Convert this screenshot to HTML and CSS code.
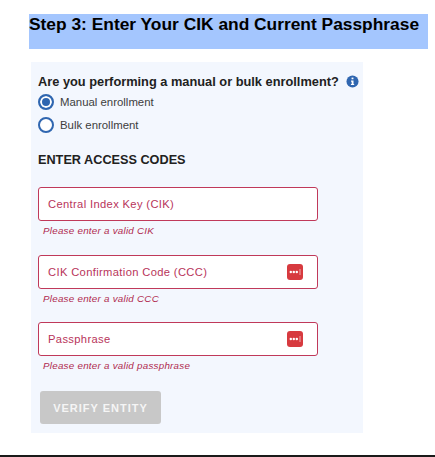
FILE: index.html
```html
<!DOCTYPE html>
<html lang="en">
  <head>
    <meta charset="UTF-8" />
    <meta name="viewport" content="width=device-width, initial-scale=1.0" />
    <title>Enter Your CIK</title>
    <link rel="stylesheet" href="styles.css">
  </head>
  <body>
    <h2 class="step-title">Step 3: Enter Your CIK and Current Passphrase</h2>
    <form class="panel">
      <div class="question">
        <span>Are you performing a manual or bulk enrollment?</span>
        <svg class="info-icon" viewBox="0 0 14 14" width="13" height="13">
          <circle cx="7" cy="7" r="6.5" fill="#2f66b0" />
          <rect x="6" y="2.8" width="2" height="1.8" fill="#fff" />
          <path d="M5.4 6h2.7v3.7h.7v1.2H5.3V9.7h.8V7.2h-.7z" fill="#fff" />
        </svg>
      </div>
      <label class="radio-row">
        <span class="radio radio-checked"></span>
        Manual enrollment
      </label>
      <label class="radio-row">
        <span class="radio"></span>
        Bulk enrollment
      </label>
      <h3 class="section-title">ENTER ACCESS CODES</h3>

      <div class="field">
        <span class="field-label">Central Index Key (CIK)</span>
      </div>
      <div class="field-error">Please enter a valid CIK</div>

      <div class="field">
        <span class="field-label">CIK Confirmation Code (CCC)</span>
        <svg class="dots-icon" viewBox="0 0 16 16" width="16" height="16">
          <rect width="16" height="16" rx="3" fill="#d73a3f" />
          <circle cx="3.8" cy="8" r="1.2" fill="#fff" />
          <circle cx="6.8" cy="8" r="1.2" fill="#fff" />
          <circle cx="9.8" cy="8" r="1.2" fill="#fff" />
          <rect x="12.6" y="5" width="0.8" height="6" fill="#f5c6c8" />
        </svg>
      </div>
      <div class="field-error">Please enter a valid CCC</div>

      <div class="field">
        <span class="field-label">Passphrase</span>
        <svg class="dots-icon" viewBox="0 0 16 16" width="16" height="16">
          <rect width="16" height="16" rx="3" fill="#d73a3f" />
          <circle cx="3.8" cy="8" r="1.2" fill="#fff" />
          <circle cx="6.8" cy="8" r="1.2" fill="#fff" />
          <circle cx="9.8" cy="8" r="1.2" fill="#fff" />
          <rect x="12.6" y="5" width="0.8" height="6" fill="#f5c6c8" />
        </svg>
      </div>
      <div class="field-error">Please enter a valid passphrase</div>

      <button class="verify-btn" type="button" disabled>VERIFY ENTITY</button>
    </form>
    <div class="page-rule"></div>
  </body>
</html>
```

FILE: styles.css
```css
html,
body {
  height: 457px;
  overflow: hidden;
}
body {
  margin: 0;
  font-family: "Liberation Sans", Arial, sans-serif;
  background-color: #fff;
}
.step-title {
  box-sizing: border-box;
  height: 35px;
  width: 399px;
  margin: 14px 0 13px 29px;
  font-size: 17.36px;
  line-height: 20px;
  font-weight: bold;
  color: #000;
  background-color: #a4c6fe;
}
.panel {
  box-sizing: border-box;
  width: 332px;
  height: 371px;
  margin-left: 31px;
  padding: 11px 4px 0 7px;
  background-color: #f3f7fe;
}
.question {
  display: flex;
  align-items: center;
  height: 16px;
  margin-bottom: 2px;
  font-size: 12.8px;
  font-weight: bold;
  white-space: nowrap;
  color: #212121;
}
.info-icon {
  margin-left: 7px;
}
.radio-row {
  display: flex;
  align-items: center;
  gap: 6px;
  height: 22.5px;
  font-size: 11.4px;
  color: #3d3d3d;
}
.radio {
  box-sizing: border-box;
  width: 16px;
  height: 16px;
  border: 2px solid #2f66b0;
  border-radius: 50%;
  background-color: #fff;
}
.radio-checked {
  background-color: #2f66b0;
  box-shadow: inset 0 0 0 2px #fff;
}
.section-title {
  margin: 17px 0 20px;
  font-size: 12.7px;
  line-height: 14px;
  font-weight: bold;
  color: #212121;
}
.field {
  box-sizing: border-box;
  display: flex;
  align-items: center;
  justify-content: space-between;
  width: 280px;
  height: 34px;
  padding: 0 14px 0 9px;
  border: 1px solid #c0395a;
  border-radius: 3px;
  background-color: #fff;
}
.field-label {
  font-size: 11.2px;
  letter-spacing: 0.35px;
  color: #b8345a;
}
.field-error {
  height: 33.5px;
  padding: 4px 0 0 5px;
  box-sizing: border-box;
  font-size: 9.8px;
  line-height: 11px;
  font-style: italic;
  letter-spacing: 0.25px;
  color: #b02a4e;
}
.verify-btn {
  display: block;
  width: 121px;
  height: 33px;
  margin: 1.5px 0 0 2px;
  border: none;
  border-radius: 3px;
  background-color: #c8c8c8;
  font-family: "Liberation Sans", Arial, sans-serif;
  font-size: 11px;
  font-weight: bold;
  letter-spacing: 1px;
  color: #f5f5f5;
}
.page-rule {
  height: 2px;
  margin-top: 22px;
  background-color: #1a1a1a;
}
```
